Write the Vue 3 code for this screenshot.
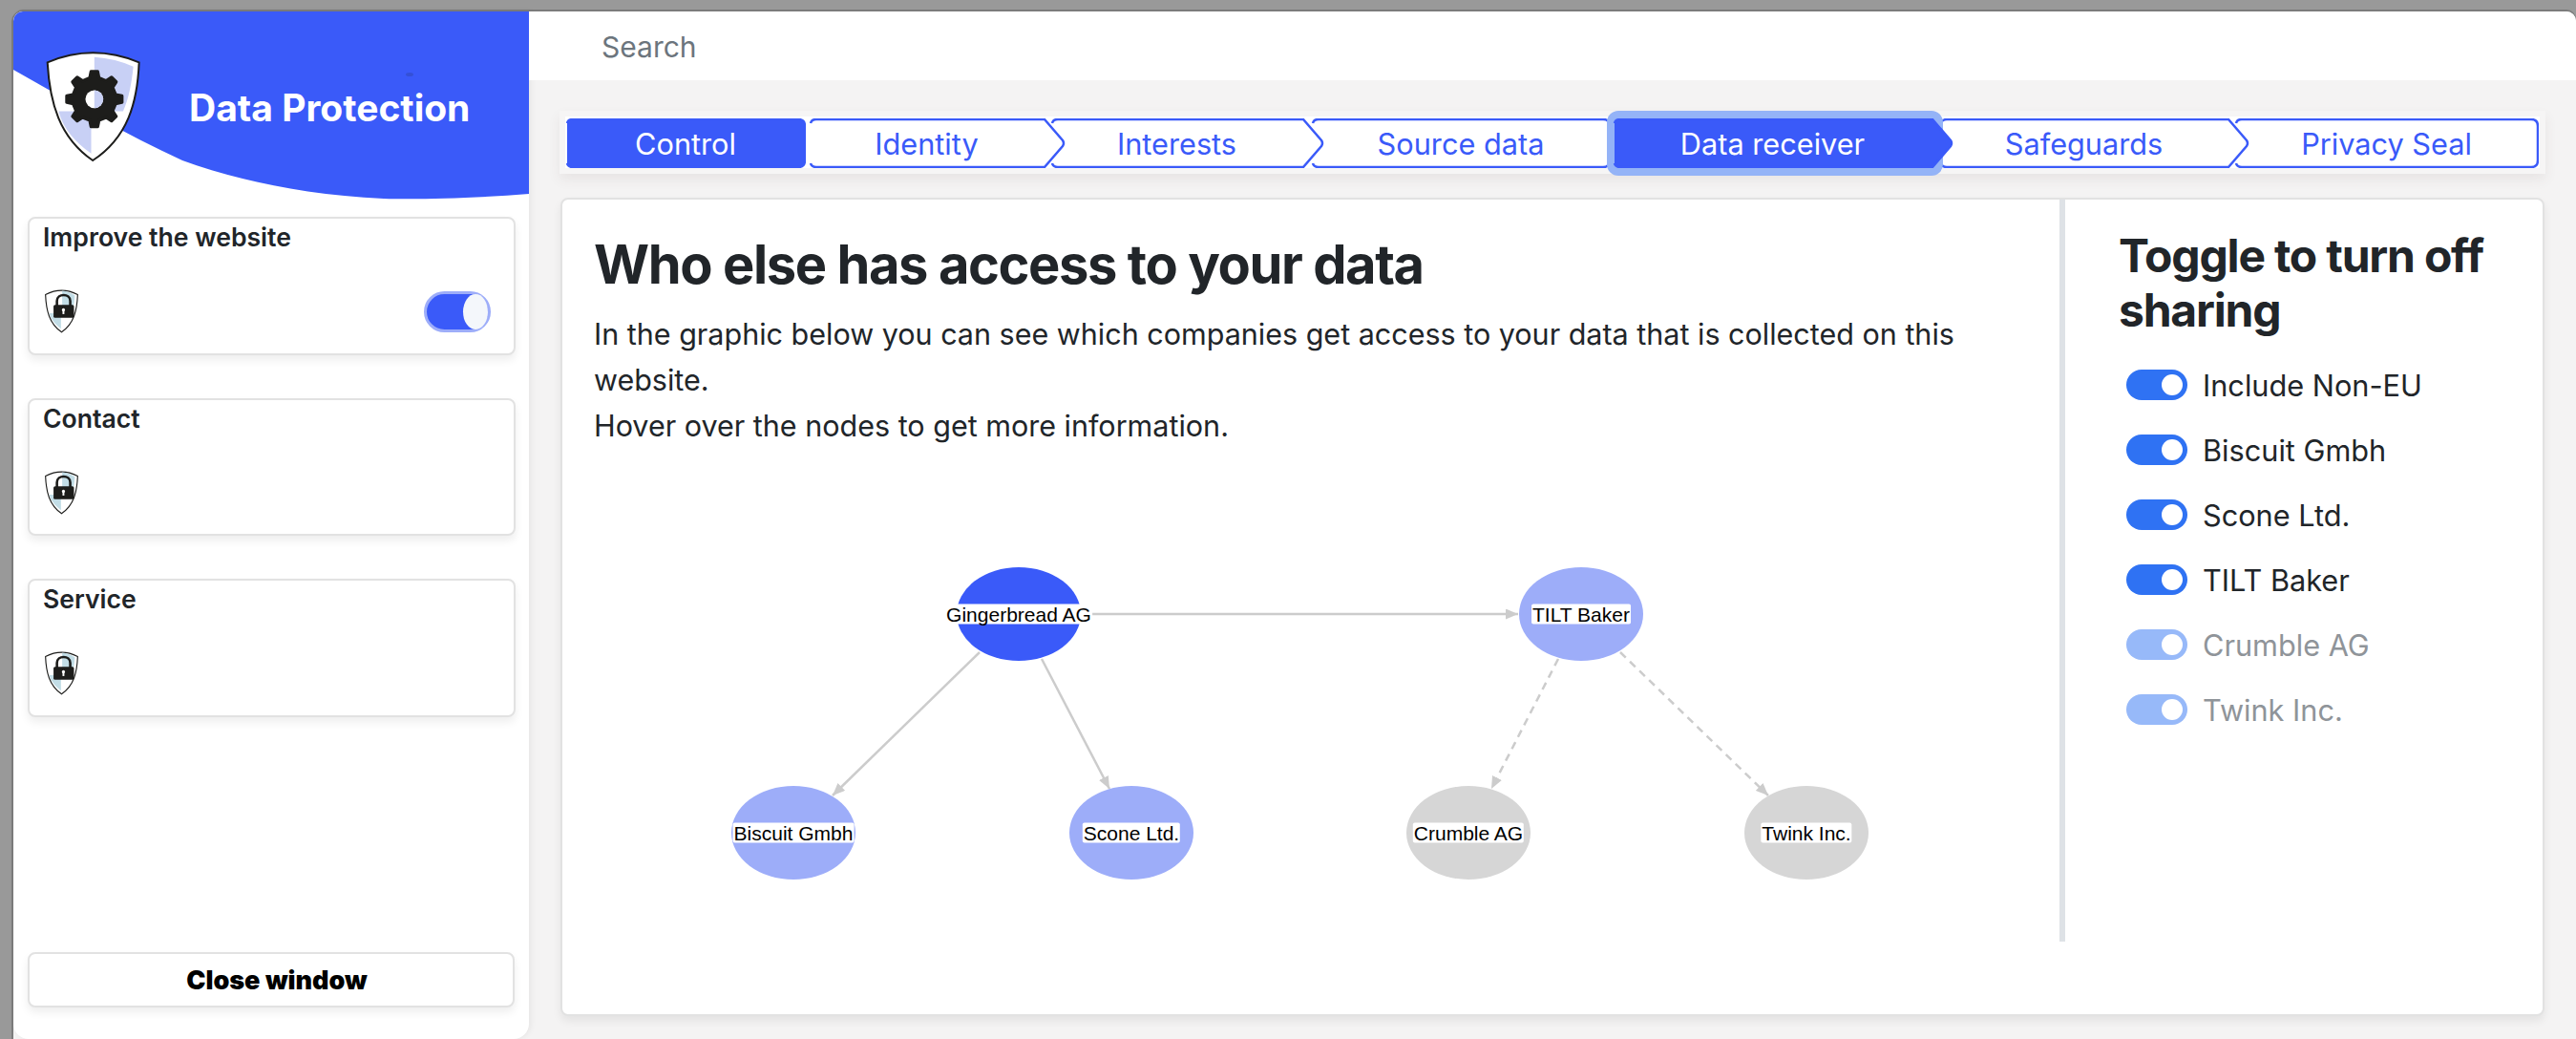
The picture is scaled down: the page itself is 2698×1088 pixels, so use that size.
<template>
  <div class="window">
    <div class="shell">
      <aside class="sidebar">
        <div class="brand">
          <svg class="brand-wave" viewBox="0 0 540 197" width="540" height="197">
            <path d="M0 0H540V191C480 196 420 197 388 196C300 192 230 175 177 156C120 130 60 95 0 61Z" fill="#3a5af9" />
            <ellipse cx="415" cy="66" rx="4" ry="2" fill="#3450d6" />
          </svg>
          <svg class="brand-logo" viewBox="50 38 305 350" width="102" height="117">
            <path d="M58 75Q200 15 345 75C340 200 310 310 200 382C95 310 65 200 58 75Z" fill="#fff" stroke="#1d1d1b" stroke-width="6" />
            <path d="M205 58Q270 62 327 88C322 140 312 190 295 228H205Z" fill="#c8d0f5" />
            <path d="M93 228H195V360C145 325 108 285 93 228Z" fill="#c8d0f5" />
            <path :d="gear" fill="#1d1d1b" stroke="#1d1d1b" stroke-width="10" stroke-linejoin="round" />
            <circle cx="205" cy="190" r="28" fill="#fff" />
            <path d="M205 162A28 28 0 0 1 205 218Z" fill="#c8d0f5" />
          </svg>
          <div class="brand-title">Data Protection</div>
        </div>

        <div class="purposes">
          <div v-for="(card, i) in purposes" :key="card" class="panel purpose">
            <div class="purpose-title">{{ card }}</div>
            <div class="purpose-row">
              <svg class="lock-shield" viewBox="45 38 110 142" width="39" height="46">
                <path d="M48 55Q100 28 152 55C150 105 140 150 100 176C60 150 50 105 48 55Z" fill="#fff" stroke="#1d1d1b" stroke-width="3.5" />
                <path d="M102 43Q125 45 143 58C141 85 137 100 130 115H102Z" fill="#c2dde6" />
                <path d="M60 115H98V165C80 152 66 135 60 115Z" fill="#c2dde6" />
                <path d="M85 92V76C85 50 128 50 128 76V92" fill="none" stroke="#1d1d1b" stroke-width="8" />
                <rect x="74" y="88" width="66" height="42" rx="5" fill="#1d1d1b" />
                <circle cx="106" cy="104" r="5" fill="#fff" />
                <rect x="103" y="104" width="6" height="14" fill="#fff" />
              </svg>
              <div v-if="i === 0" class="big-toggle"><span class="big-knob"></span></div>
            </div>
          </div>
        </div>

        <button class="panel close-btn">Close window</button>
      </aside>

      <main class="content">
        <div class="searchbar">Search</div>

        <div class="stepper">
          <div class="steps">
            <div
              v-for="(step, i) in steps"
              :key="step.label"
              class="step"
              :class="{ filled: step.filled, current: step.current, tipped: step.tip }"
              :style="{ width: `${step.w}px`, marginLeft: `${step.gap}px`, zIndex: step.current ? 20 : 10 - i }"
            >
              <svg class="step-shape" :viewBox="`0 0 ${step.w} 52`" :width="step.w" height="52">
                <path :d="stepPath(step)" />
              </svg>
              <span class="step-label">{{ step.label }}</span>
            </div>
          </div>
        </div>

        <section class="panel main-card">
          <div class="graph-col">
            <h1>Who else has access to your data</h1>
            <p>
              In the graphic below you can see which companies get access to your data that is collected on this website.<br />
              Hover over the nodes to get more information.
            </p>
            <div class="graph">
              <svg class="graph-svg" width="1500" height="330" viewBox="0 0 1500 330">
                <defs>
                  <marker id="arrow" markerWidth="13" markerHeight="11" refX="13" refY="5.5" orient="auto" markerUnits="userSpaceOnUse">
                    <path d="M0 0L13 5.5L0 11Z" fill="#ccc" />
                  </marker>
                </defs>
                <line
                  v-for="e in edges"
                  :key="e.id"
                  :x1="e.x1 - ox" :y1="e.y1 - oy" :x2="e.x2 - ox" :y2="e.y2 - oy"
                  stroke="#ccc" stroke-width="2.5"
                  :stroke-dasharray="e.dashed ? '8 6' : null"
                  marker-end="url(#arrow)"
                />
                <ellipse
                  v-for="n in nodes"
                  :key="n.label"
                  :cx="n.x - ox" :cy="n.y - oy" rx="65" ry="49"
                  :fill="n.color"
                />
              </svg>
              <span
                v-for="n in nodes"
                :key="n.label"
                class="node-label"
                :style="{ left: `${n.x - ox}px`, top: `${n.y - oy}px` }"
              >{{ n.label }}</span>
            </div>
          </div>
          <div class="share-col">
            <h2>Toggle to turn off sharing</h2>
            <ul class="share-list">
              <li v-for="s in sharing" :key="s.label" :class="{ off: s.off }">
                <span class="switch"><span class="switch-knob"></span></span>
                <span>{{ s.label }}</span>
              </li>
            </ul>
          </div>
        </section>
      </main>
    </div>
  </div>
</template>

<script setup>
const purposes = ['Improve the website', 'Contact', 'Service'];

const steps = [
  { label: 'Control', w: 252, gap: 0, filled: true, end: 'round' },
  { label: 'Identity', w: 269, gap: 3, tip: true },
  { label: 'Interests', w: 287, gap: -16, tip: true },
  { label: 'Source data', w: 314, gap: -14, end: 'round' },
  { label: 'Data receiver', w: 357, gap: 2, tip: true, filled: true, current: true },
  { label: 'Safeguards', w: 325, gap: -15, tip: true },
  { label: 'Privacy Seal', w: 319, gap: -16, end: 'round' }
];

const stepPath = (s) => {
  const w = s.w;
  const right = s.tip
    ? `H${w - 22}L${w - 3} 23Q${w - 1} 26 ${w - 3} 29L${w - 22} 51`
    : `H${w - 8}Q${w - 1} 1 ${w - 1} 8V44Q${w - 1} 51 ${w - 8} 51`;
  return `M2 5Q3 1 8 1${right}H8Q3 51 2 47`;
};

// gear outline used in the logo
const gearPoints = () => {
  const cx = 205;
  const cy = 190;
  const pts = [];
  const teeth = 8;
  for (let i = 0; i < teeth; i++) {
    const a = (i / teeth) * Math.PI * 2;
    const t = (Math.PI * 2) / teeth;
    for (const [off, r] of [[-0.27, 68], [-0.15, 87], [0.15, 87], [0.27, 68]]) {
      const ang = a + off * t;
      pts.push(`${(cx + Math.cos(ang) * r).toFixed(1)} ${(cy + Math.sin(ang) * r).toFixed(1)}`);
    }
  }
  return `M${pts.join('L')}Z`;
};
const gear = gearPoints();

// page coordinates of the graph's box
const ox = 622;
const oy = 580;

const nodes = [
  { label: 'Gingerbread AG', x: 1067, y: 643, color: '#3a5af9' },
  { label: 'TILT Baker', x: 1656, y: 643, color: '#9dadf9' },
  { label: 'Biscuit Gmbh', x: 831, y: 872, color: '#9dadf9' },
  { label: 'Scone Ltd.', x: 1185, y: 872, color: '#9dadf9' },
  { label: 'Crumble AG', x: 1538, y: 872, color: '#d6d6d6' },
  { label: 'Twink Inc.', x: 1892, y: 872, color: '#d6d6d6' }
];

const edges = [
  { id: 'a', x1: 1144, y1: 643, x2: 1590, y2: 643 },
  { id: 'b', x1: 1026, y1: 683, x2: 872, y2: 833 },
  { id: 'c', x1: 1091, y1: 690, x2: 1162, y2: 826 },
  { id: 'd', x1: 1632, y1: 690, x2: 1562, y2: 826, dashed: true },
  { id: 'e', x1: 1697, y1: 683, x2: 1852, y2: 833, dashed: true }
];

const sharing = [
  { label: 'Include Non-EU' },
  { label: 'Biscuit Gmbh' },
  { label: 'Scone Ltd.' },
  { label: 'TILT Baker' },
  { label: 'Crumble AG', off: true },
  { label: 'Twink Inc.', off: true }
];
</script>

<style>
html, body {
  margin: 0;
  background: #999;
}
</style>

<style scoped>
.window {
  width: 2698px;
  height: 1088px;
  box-sizing: border-box;
  padding: 12px 0 0 14px;
  background: #999;
  overflow: hidden;
  font-family: Inter, "Liberation Sans", sans-serif;
  color: #212529;
}

.shell {
  display: flex;
  height: 1076px;
  border-radius: 10px 10px 0 0;
  background: #f4f3f3;
  box-shadow: 0 -2px 0 #7c7c7c, -2px 0 0 #7c7c7c;
}

.sidebar {
  width: 540px;
  flex: none;
  display: flex;
  flex-direction: column;
  box-sizing: border-box;
  padding-bottom: 33px;
  background: #fff;
  border-radius: 10px 0 16px 16px;
  box-shadow: 2px 0 6px rgba(0, 0, 0, 0.06);
  overflow: hidden;
}

.brand {
  position: relative;
  height: 197px;
  flex: none;
}

.brand-wave {
  display: block;
}

.brand-logo {
  position: absolute;
  left: 33px;
  top: 41px;
}

.brand-title {
  position: absolute;
  left: 184px;
  top: 78px;
  font-size: 39px;
  line-height: 46px;
  font-weight: 700;
  color: #fff;
}

.purposes {
  display: flex;
  flex-direction: column;
  gap: 45px;
  margin: 18px 14px 0 15px;
}

.panel {
  background: #fff;
  border: 2px solid #e2e2e2;
  border-radius: 8px;
  box-shadow: 0 5px 10px rgba(0, 0, 0, 0.07);
}

.purpose {
  height: 144.5px;
  box-sizing: border-box;
  padding: 3px 24px 0 14px;
}

.purpose-title {
  font-size: 26.6px;
  line-height: 32px;
  font-weight: 600;
}

.purpose-row {
  display: flex;
  justify-content: space-between;
  align-items: flex-start;
  margin-top: 39px;
}

.lock-shield {
  display: block;
}

.big-toggle {
  width: 70px;
  height: 43px;
  margin-top: 2px;
  box-sizing: border-box;
  border: 3px solid #9dadf9;
  border-radius: 22px;
  background: #3a5af9;
  display: flex;
  justify-content: flex-end;
}

.big-knob {
  width: 26px;
  height: 37px;
  border-radius: 50%;
  background: #f4f7fb;
}

.close-btn {
  margin: auto 15px 0 15px;
  height: 58px;
  padding: 0 0 0 12px;
  font-family: inherit;
  font-size: 27px;
  font-weight: 900;
  color: #000;
}

.content {
  flex: 1;
  min-width: 0;
  display: flex;
  flex-direction: column;
}

.searchbar {
  height: 72px;
  flex: none;
  box-sizing: border-box;
  padding-left: 76px;
  background: #fff;
  border-top-right-radius: 10px;
  font-size: 30px;
  line-height: 74px;
  color: #6c757d;
}

.stepper {
  margin: 32px 32px 0 32px;
  padding: 6px;
  height: 66px;
  box-sizing: border-box;
  background: #f6f5f5;
  box-shadow: 0 6px 12px rgba(90, 60, 60, 0.08);
}

.steps {
  display: flex;
  height: 54px;
  box-sizing: border-box;
  padding-top: 2px;
  background: #fff;
}

.step {
  position: relative;
  flex: none;
  height: 52px;
  box-sizing: border-box;
  display: flex;
  align-items: center;
  justify-content: center;
  color: #3a5af9;
  font-size: 30.7px;
}

.step.tipped {
  padding-right: 22px;
}

.step-shape {
  position: absolute;
  left: 0;
  top: 0;
}

.step-shape path {
  fill: #fff;
  stroke: #3a5af9;
  stroke-width: 2.5;
}

.step.filled {
  color: #fff;
}

.step.filled .step-shape path {
  fill: #3a5af9;
}

.step.current::before {
  content: "";
  position: absolute;
  left: -6px;
  right: 11px;
  top: -8px;
  bottom: -8px;
  border-radius: 12px;
  background: #94b3f7;
}

.step-shape,
.step-label {
  z-index: 1;
}

.step-label {
  position: relative;
}

.main-card {
  flex: none;
  display: flex;
  height: 857px;
  box-sizing: border-box;
  margin: 25px 33px 0 33px;
}

.graph-col {
  width: 1574px;
  height: 777px;
  box-sizing: border-box;
  padding: 36px 32px 0 33px;
  border-right: 6px solid #dee2e6;
  flex: none;
}

h1 {
  margin: 0;
  font-size: 56px;
  line-height: 64px;
  font-weight: 700;
  letter-spacing: -1.4px;
}

p {
  margin: 17px 0 0;
  font-size: 30.5px;
  line-height: 48px;
}

.graph {
  position: relative;
  margin-top: 110px;
  width: 1500px;
  height: 330px;
}

.graph-svg {
  display: block;
  overflow: visible;
}

.node-label {
  position: absolute;
  transform: translate(-50%, -50%);
  padding: 0 1px;
  background: #fff;
  border-radius: 2px;
  font-family: "Liberation Sans", sans-serif;
  font-size: 21px;
  line-height: 21px;
  color: #000;
  white-space: nowrap;
}

.share-col {
  flex: 1;
  padding: 30px 40px 0 56px;
}

h2 {
  margin: 0;
  font-size: 48px;
  line-height: 57px;
  font-weight: 700;
  letter-spacing: -1.2px;
}

.share-list {
  list-style: none;
  margin: 34px 0 0;
  padding: 0 0 0 8px;
  display: flex;
  flex-direction: column;
  gap: 36px;
}

.share-list li {
  display: flex;
  align-items: center;
  gap: 16px;
  height: 32px;
  font-size: 30.7px;
}

.share-list li.off {
  color: #8f9499;
}

.switch {
  width: 64px;
  height: 32px;
  border-radius: 16px;
  background: #2f72f3;
  display: flex;
  align-items: center;
  justify-content: flex-end;
  padding-right: 5px;
  box-sizing: border-box;
}

.off .switch {
  background: #97b9f9;
}

.switch-knob {
  width: 22px;
  height: 22px;
  border-radius: 50%;
  background: #fff;
}
</style>
